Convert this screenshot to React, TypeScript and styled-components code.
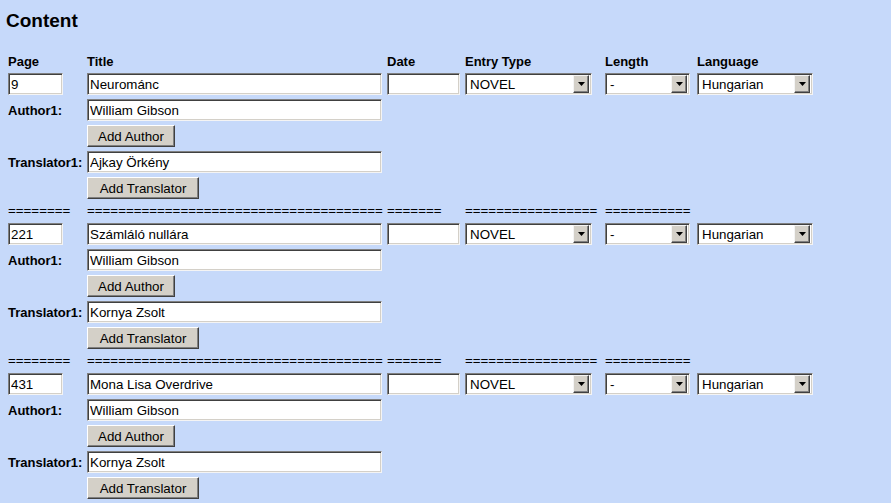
import styled, { createGlobalStyle, css } from "styled-components";

type Entry = {
  page: string;
  title: string;
  author: string;
  translator: string;
};

const entries: Entry[] = [
  { page: "9", title: "Neurománc", author: "William Gibson", translator: "Ajkay Örkény" },
  { page: "221", title: "Számláló nullára", author: "William Gibson", translator: "Kornya Zsolt" },
  { page: "431", title: "Mona Lisa Overdrive", author: "William Gibson", translator: "Kornya Zsolt" },
];

const eq = (n: number) => "=".repeat(n);

function DropDown({ value, width }: { value: string; width: number }) {
  return (
    <SelectBox $w={width}>
      <SelectText>{value}</SelectText>
      <ArrowButton>
        <svg width="7" height="4" viewBox="0 0 7 4">
          <path d="M0 0h7L3.5 4z" fill="#000" />
        </svg>
      </ArrowButton>
    </SelectBox>
  );
}

export default function App() {
  return (
    <Page>
      <GlobalStyle />
      <Heading>Content</Heading>

      <Form>
        <Line>
          <HeadCell>Page</HeadCell>
          <HeadCell>Title</HeadCell>
          <HeadCell>Date</HeadCell>
          <HeadCell>Entry Type</HeadCell>
          <HeadCell>Length</HeadCell>
          <HeadCell>Language</HeadCell>
        </Line>

        {entries.map((e, i) => (
          <Block key={i}>
            {i > 0 && (
              <SepLine>
                <span>{eq(8)}</span>
                <span>{eq(38)}</span>
                <span>{eq(7)}</span>
                <span>{eq(17)}</span>
                <span>{eq(11)}</span>
              </SepLine>
            )}

            <Line>
              <TextInput $w={55} defaultValue={e.page} />
              <TextInput $w={295} defaultValue={e.title} />
              <TextInput $w={73} defaultValue="" />
              <DropDown value="NOVEL" width={127} />
              <DropDown value="-" width={85} />
              <DropDown value="Hungarian" width={116} />
            </Line>

            <Line>
              <Label>Author1:</Label>
              <TextInput $w={295} defaultValue={e.author} />
            </Line>
            <Line>
              <span />
              <Button type="button" $w={88}>Add Author</Button>
            </Line>

            <Line>
              <Label>Translator1:</Label>
              <TextInput $w={295} defaultValue={e.translator} />
            </Line>
            <Line>
              <span />
              <Button type="button" $w={112}>Add Translator</Button>
            </Line>
          </Block>
        ))}
      </Form>
    </Page>
  );
}

/* ===== base ===== */

const GlobalStyle = createGlobalStyle`
  html, body {
    margin: 0;
    padding: 0;
    background: #c6d9fa;
  }
  body {
    font-family: "Liberation Sans", Arial, sans-serif;
    color: #000;
  }
`;

const Page = styled.div`
  min-height: 100vh;
  padding: 0 8px;
  background: #c6d9fa;
  box-sizing: border-box;
`;

const Heading = styled.h2`
  margin: 10px 0 22px -2px;
  font-size: 19px;
  font-weight: bold;
`;

/* ===== table-ish grid ===== */

const columns = css`
  display: grid;
  grid-template-columns: 79px 300px 78px 140px 92px 1fr;
  align-items: center;
`;

const Form = styled.div`
  display: flex;
  flex-direction: column;
  gap: 4px;
`;

const Block = styled.div`
  display: flex;
  flex-direction: column;
  gap: 4px;
`;

const Line = styled.div`
  ${columns};
  min-height: 15px;
`;

const SepLine = styled.div`
  ${columns};
  height: 16px;
  font-size: 13.33px;
  line-height: 16px;
  white-space: nowrap;
  overflow: hidden;
`;

const HeadCell = styled.div`
  font-size: 13px;
  font-weight: bold;
  line-height: 15px;
`;

const Label = styled.div`
  font-size: 13px;
  font-weight: bold;
  white-space: nowrap;
`;

/* ===== controls ===== */

const inset = css`
  box-sizing: border-box;
  height: 22px;
  background: #fff;
  border: 1px solid;
  border-color: #808080 #f4f4f4 #f4f4f4 #808080;
  box-shadow: inset 1px 1px 0 #404040, inset -1px -1px 0 #d4d0c8;
`;

const TextInput = styled.input<{ $w: number }>`
  ${inset};
  width: ${(p) => p.$w}px;
  margin: 0;
  padding: 0 2px;
  font-family: "Liberation Sans", Arial, sans-serif;
  font-size: 13.33px;
  color: #000;
  outline: none;
`;

const SelectBox = styled.div<{ $w: number }>`
  ${inset};
  width: ${(p) => p.$w}px;
  display: flex;
  align-items: center;
  padding: 2px;
  font-size: 13.33px;
`;

const SelectText = styled.span`
  flex: 1;
  padding-left: 2px;
  white-space: nowrap;
  overflow: hidden;
`;

const ArrowButton = styled.span`
  box-sizing: border-box;
  width: 16px;
  height: 18px;
  display: flex;
  align-items: center;
  justify-content: center;
  background: #d4d0c8;
  border: 1px solid;
  border-color: #f4f4f4 #404040 #404040 #f4f4f4;
  box-shadow: inset -1px -1px 0 #808080;
`;

const Button = styled.button<{ $w: number }>`
  box-sizing: border-box;
  width: ${(p) => p.$w}px;
  height: 22px;
  margin: 0;
  padding: 0;
  background: #d4d0c8;
  border: 1px solid;
  border-color: #fff #404040 #404040 #fff;
  box-shadow: inset -1px -1px 0 #808080;
  font-family: "Liberation Sans", Arial, sans-serif;
  font-size: 13.33px;
  color: #000;
  cursor: pointer;
`;
